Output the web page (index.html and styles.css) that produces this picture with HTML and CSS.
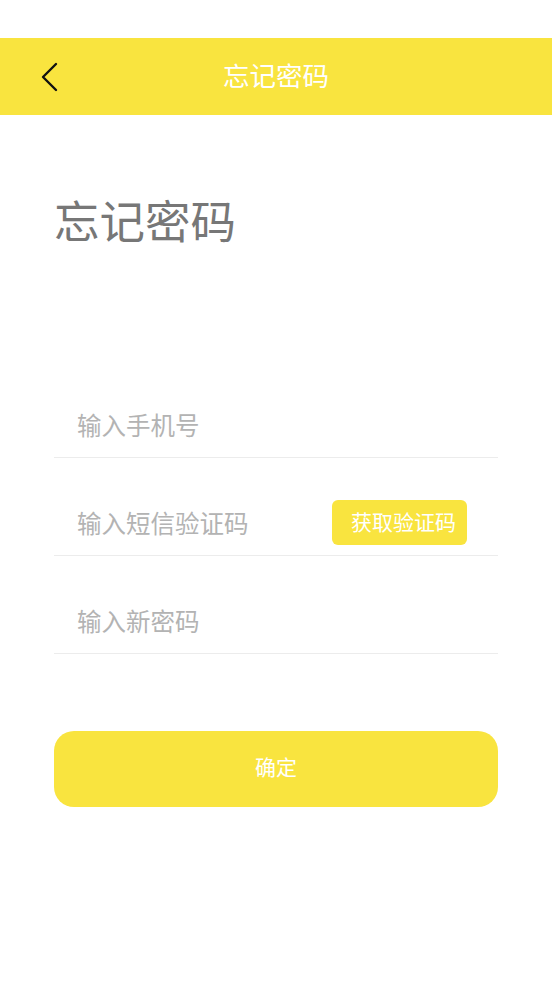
FILE: index.html
```html
<!DOCTYPE html>
<html lang="zh-CN">
<head>
<meta charset="utf-8">
<title>忘记密码</title>
<link rel="stylesheet" href="styles.css">
</head>
<body>
<div class="status"></div>
<header class="nav">
  <button class="back" aria-label="返回">
    <svg width="18" height="30" viewBox="0 0 18 30"><polyline points="16,2 3,15 16,28" fill="none" stroke="#111" stroke-width="2.4" stroke-linecap="round" stroke-linejoin="round"/></svg>
  </button>
  <h1 class="nav-title">忘记密码</h1>
</header>
<main class="content">
  <h2 class="page-title">忘记密码</h2>
  <form class="form">
    <div class="field"><input class="input" type="tel" placeholder="输入手机号"></div>
    <div class="field"><input class="input" type="text" placeholder="输入短信验证码"><button type="button" class="code-btn">获取验证码</button></div>
    <div class="field"><input class="input" type="password" placeholder="输入新密码"></div>
    <button type="button" class="submit">确定</button>
  </form>
</main>
</body>
</html>
```
FILE: styles.css
```css
* { box-sizing: border-box; }
html, body { margin: 0; padding: 0; background: #fff; }
body {
  width: 552px;
  height: 981px;
  font-family: "Noto Sans CJK SC", "Noto Sans", sans-serif;
  overflow: hidden;
}
.status { height: 38px; }
.nav {
  height: 77px;
  background: #f9e43f;
  display: flex;
  align-items: center;
  justify-content: center;
  position: relative;
}
.back {
  position: absolute;
  left: 40px;
  top: 24px;
  padding: 0;
  border: 0;
  background: none;
  width: 18px;
  height: 30px;
  display: block;
}
.back svg { display: block; }
.nav-title {
  margin: 0 0 4px;
  font-size: 26.5px;
  font-weight: 400;
  color: #fff;
  line-height: 30px;
}
.content { padding: 0 54px; }
.page-title {
  margin: 79px 0 0;
  font-size: 45.5px;
  line-height: 50px;
  font-weight: 400;
  color: #777;
}
.form { margin-top: 116px; display: flex; flex-direction: column; }
.field {
  height: 98px;
  padding: 38px 0 0 23px;
  border-bottom: 1px solid #ececec;
  display: flex;
  align-items: center;
}
.input {
  flex: 1;
  min-width: 0;
  border: 0;
  outline: none;
  padding: 0 0 6px;
  height: 60px;
  font-family: inherit;
  font-size: 24.5px;
  color: #333;
  background: transparent;
}
.input::placeholder { color: #b3b3b3; }
.code-btn {
  flex: none;
  width: 135px;
  height: 45px;
  margin: 0 31px 6px 0;
  padding: 0 0 4px 8px;
  border: 0;
  border-radius: 6px;
  background: #f9e43f;
  color: #fff;
  font-family: inherit;
  font-size: 21px;
}
.submit {
  margin-top: 77px;
  height: 76px;
  padding: 0 0 6px;
  border: 0;
  border-radius: 20px;
  background: #f9e43f;
  color: #fff;
  font-family: inherit;
  font-size: 21px;
}
```
